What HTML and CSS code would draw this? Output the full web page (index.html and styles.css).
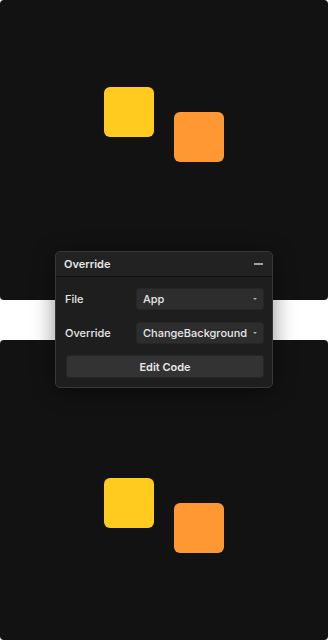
FILE: index.html
```html
<!DOCTYPE html>
<html lang="en">
<head>
    <meta charset="UTF-8">
    <meta name="viewport" content="width=device-width, initial-scale=1.0">
    <title>Override</title>
    <link rel="stylesheet" href="styles.css">
</head>
<body>
    <div class="stage stage-top">
        <div class="box box-yellow"></div>
        <div class="box box-orange"></div>
    </div>
    <div class="stage stage-bottom">
        <div class="box box-yellow"></div>
        <div class="box box-orange"></div>
    </div>

    <div class="panel">
        <div class="panel-header">
            <span class="panel-title">Override</span>
            <span class="panel-min"></span>
        </div>
        <div class="panel-body">
            <div class="row">
                <label class="row-label">File</label>
                <div class="select">App<span class="caret"></span></div>
            </div>
            <div class="row">
                <label class="row-label">Override</label>
                <div class="select">ChangeBackground<span class="caret"></span></div>
            </div>
            <button class="edit-button">Edit Code</button>
        </div>
    </div>
</body>
</html>
```

FILE: styles.css
```css
body { margin: 0; background-color: #ffffff; font-family: Inter, 'Noto Sans', sans-serif; position: relative; width: 328px; height: 640px; overflow: hidden; }
.stage { height: 300px; background-color: #121212; border-radius: 4px; display: flex; gap: 20px; padding-left: 104px; box-sizing: border-box; }
.stage-top { padding-top: 87px; margin-bottom: 40px; }
.stage-bottom { padding-top: 138px; }
.box { width: 50px; height: 50px; border-radius: 6px; }
.box-yellow { background-color: #ffcb1f; }
.box-orange { background-color: #ff9733; margin-top: 25px; }

.panel {
    position: absolute;
    left: 55px;
    top: 251px;
    width: 218px;
    box-sizing: border-box;
    background-color: #1e1e1e;
    border: 1px solid #383838;
    border-radius: 5px;
    box-shadow: 0 4px 22px rgba(0, 0, 0, 0.45);
    color: #e8e8e8;
}
.panel-header {
    display: flex;
    justify-content: space-between;
    align-items: center;
    height: 24px;
    padding: 0 8px;
    background-color: #222222;
    border-bottom: 1px solid #101010;
    border-radius: 5px 5px 0 0;
}
.panel-title { font-size: 11px; font-weight: 600; }
.panel-min { width: 9px; height: 2px; background-color: #a0a0a0; margin-right: 1px; }
.panel-body { padding: 11px 8px 9px 9px; display: flex; flex-direction: column; gap: 12px; }
.row { display: flex; align-items: center; justify-content: space-between; }
.row-label { font-size: 11px; font-weight: 500; }
.select {
    position: relative;
    width: 128px;
    height: 22px;
    box-sizing: border-box;
    padding: 0 6px;
    display: flex;
    align-items: center;
    font-size: 11px;
    font-weight: 500;
    background-color: #2d2d2d;
    border: 1px solid #262626;
    border-radius: 3px;
}
.caret { position: absolute; right: 6px; top: 9px; border-left: 2px solid transparent; border-right: 2px solid transparent; border-top: 2px solid #b0b0b0; }
.edit-button {
    height: 23px;
    margin-top: -1px;
    margin-left: 1px;
    font-family: inherit;
    font-size: 11px;
    font-weight: 600;
    color: #e8e8e8;
    background-color: #333333;
    border: 1px solid #262626;
    border-radius: 3px;
}
```
